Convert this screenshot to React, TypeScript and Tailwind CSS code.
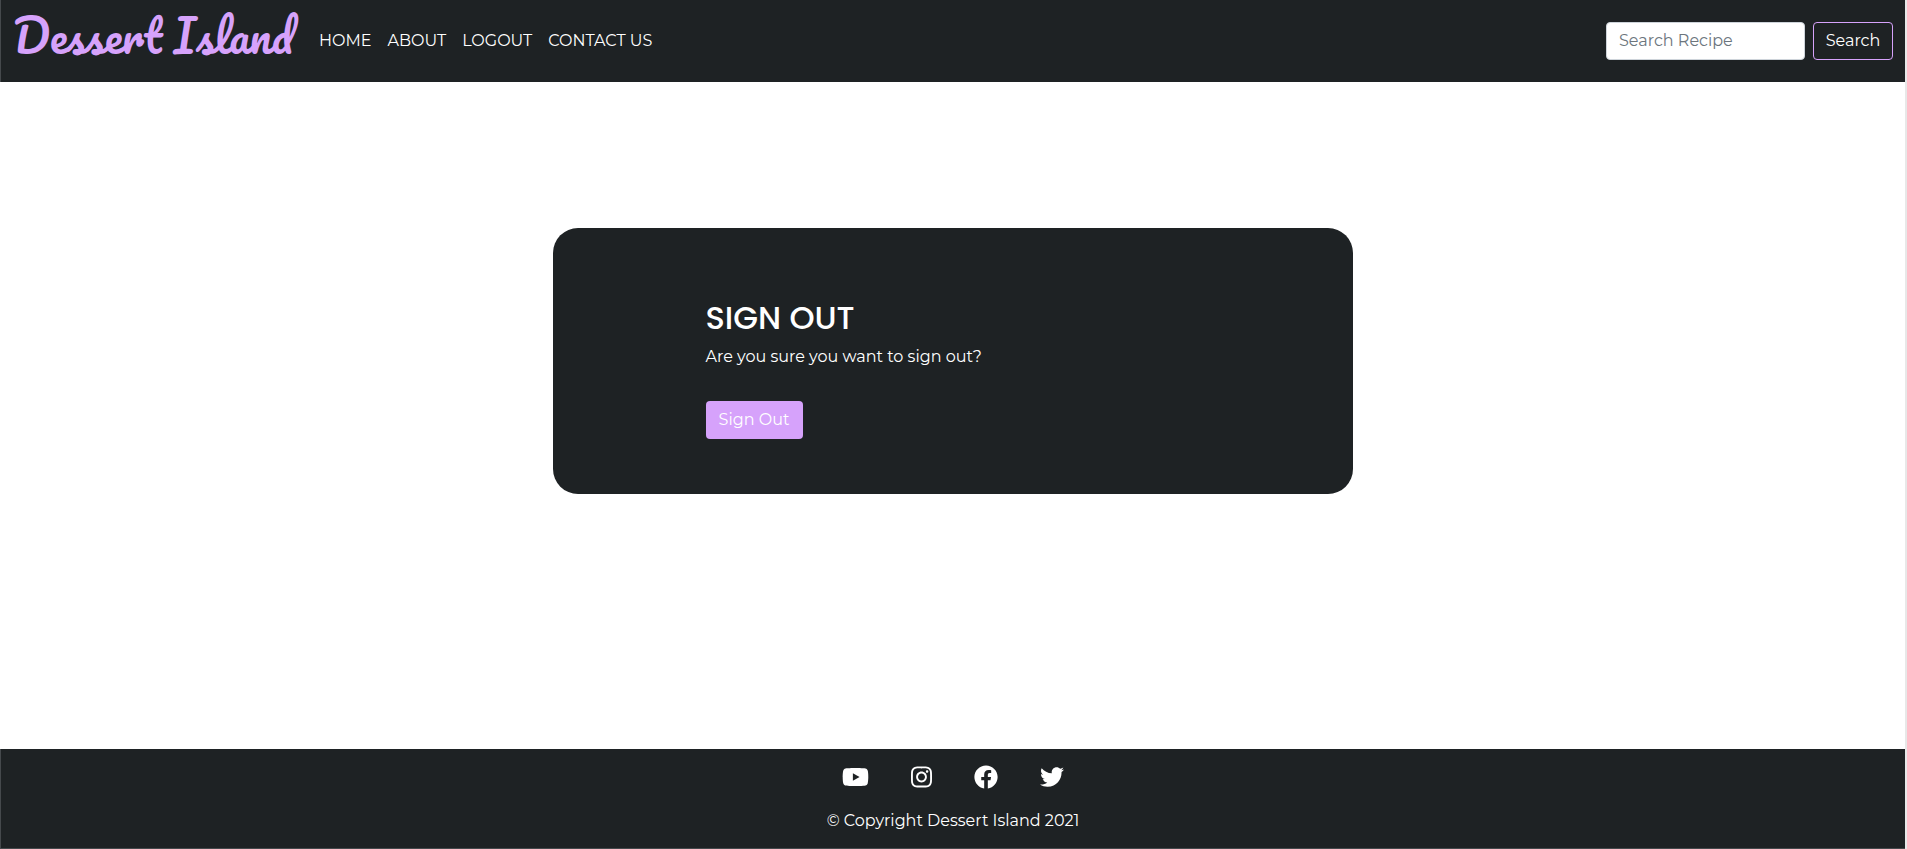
import { FaFacebook, FaInstagram, FaTwitter, FaYoutube } from "react-icons/fa";

const navLinks = ["HOME", "ABOUT", "LOGOUT", "CONTACT US"];

const socialLinks = [
  { label: "YouTube", Icon: FaYoutube, size: "h-6 w-[27px]" },
  { label: "Instagram", Icon: FaInstagram, size: "h-6 w-[21px]" },
  { label: "Facebook", Icon: FaFacebook, size: "h-6 w-6" },
  { label: "Twitter", Icon: FaTwitter, size: "h-6 w-6" },
];

function Header() {
  return (
    <header className="flex h-[82px] items-center border-l border-[#45494c] bg-[#1e2224] px-3">
      <a
        href="#"
        className="mr-[26px] -mt-2.5 whitespace-nowrap font-['Pacifico',cursive] text-[44px] leading-[60px] text-[#d6a2fb]"
      >
        Dessert Island
      </a>
      <nav className="flex gap-4">
        {navLinks.map((link) => (
          <a key={link} href="#" className="whitespace-nowrap hover:text-[#d6a2fb]">
            {link}
          </a>
        ))}
      </nav>
      <form className="ml-auto flex gap-2" onSubmit={(e) => e.preventDefault()}>
        <input
          type="search"
          aria-label="Search Recipe"
          placeholder="Search Recipe"
          className="h-[38px] w-[199px] rounded border border-[#ced4da] bg-white px-3 pb-0.5 text-[#212529] placeholder:text-[#6c757d]"
        />
        <button
          type="submit"
          className="h-[38px] w-20 rounded border border-[#d6a2fb] text-center"
        >
          Search
        </button>
      </form>
    </header>
  );
}

function SignOutCard() {
  return (
    <section className="w-[800px] max-w-full rounded-[25px] bg-[#1e2224] pt-[70px] pb-[55px] pl-[153px]">
      <h1 className="font-['Poppins','Inter',sans-serif] text-[32px] leading-10 font-medium">
        SIGN OUT
      </h1>
      <p className="mt-[7px] leading-6">Are you sure you want to sign out?</p>
      <button
        type="button"
        className="mt-8 block h-[38px] w-[97px] rounded bg-[#d6a2fb] text-center"
      >
        Sign Out
      </button>
    </section>
  );
}

function Footer() {
  return (
    <footer className="flex h-[100px] flex-col items-center border-b border-l border-[#45494c] bg-[#1e2224] pt-4">
      <div className="flex gap-[42px]">
        {socialLinks.map(({ label, Icon, size }) => (
          <a key={label} href="#" aria-label={label}>
            <Icon className={size} />
          </a>
        ))}
      </div>
      <p className="mt-5 leading-6">© Copyright Dessert Island 2021</p>
    </footer>
  );
}

export default function App() {
  return (
    <div className="flex min-h-screen flex-col border-r-2 border-[#e8e8e8] bg-white font-['Montserrat','Inter',sans-serif] text-base text-white">
      <Header />
      <main className="flex flex-1 items-start justify-center pt-[146px]">
        <SignOutCard />
      </main>
      <Footer />
    </div>
  );
}
